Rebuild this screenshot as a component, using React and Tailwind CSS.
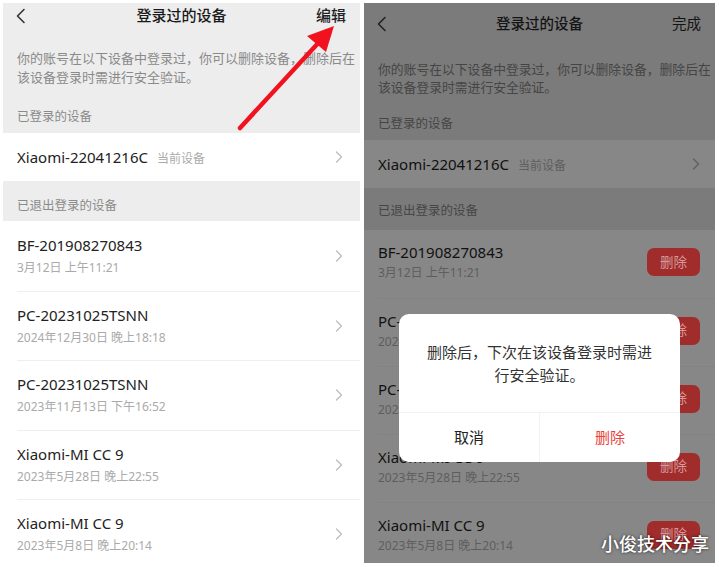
import React from 'react';

const FONT = "font-['Noto_Sans','Noto_Sans_CJK_SC',sans-serif]";

const devices = [
  { name: 'BF-201908270843', time: '3月12日 上午11:21' },
  { name: 'PC-20231025TSNN', time: '2024年12月30日 晚上18:18' },
  { name: 'PC-20231025TSNN', time: '2023年11月13日 下午16:52' },
  { name: 'Xiaomi-MI CC 9', time: '2023年5月28日 晚上22:55' },
  { name: 'Xiaomi-MI CC 9', time: '2023年5月8日 晚上20:14' },
];

const BackIcon = ({ color }) => (
  <svg width="12" height="16" viewBox="0 0 12 16" fill="none">
    <path d="M9 1.5 L2.5 8 L9 14.5" stroke={color} strokeWidth="1.6" strokeLinecap="round" strokeLinejoin="round" />
  </svg>
);

const Chevron = ({ color }) => (
  <svg width="8" height="12" viewBox="0 0 8 12" fill="none">
    <path d="M1.5 1 L6.5 6 L1.5 11" stroke={color} strokeWidth="1.2" strokeLinecap="round" strokeLinejoin="round" />
  </svg>
);

// left screen: normal state
const LeftScreen = () => (
  <div className="relative w-[357px] h-[564px] mt-[3px] ml-[3px] bg-[#ededed] overflow-hidden">
    <div className="h-[25px] px-[12px] grid grid-cols-[1fr_auto_1fr] items-center">
      <BackIcon color="#333" />
      <span className="text-[15px] font-medium text-[#1a1a1a]">登录过的设备</span>
      <span className="justify-self-end text-[15px] font-medium text-[#222] mr-[2px]">编辑</span>
    </div>
    <p className="pt-[21px] pl-[14px] pr-[2px] text-[13px] leading-[19px] text-[#8a8a8a]">
      你的账号在以下设备中登录过，你可以删除设备，删除后在该设备登录时需进行安全验证。
    </p>
    <div className="pt-[22px] pb-[8px] px-[14px] text-[12.5px] leading-[16px] text-[#8a8a8a]">已登录的设备</div>
    <div className="h-[48px] bg-white pl-[14px] pr-[17px] flex items-center justify-between">
      <div className="flex items-baseline gap-[9px]">
        <span className="text-[15px] text-[#222]">Xiaomi-22041216C</span>
        <span className="text-[12px] text-[#aaa]">当前设备</span>
      </div>
      <Chevron color="#bbb" />
    </div>
    <div className="pt-[17px] pb-[7px] px-[14px] text-[12.5px] leading-[16px] text-[#8a8a8a]">已退出登录的设备</div>
    <div className="bg-white">
      {devices.map((d, i) => (
        <div key={i} className="h-[69.5px] pl-[14px] flex">
          <div className={`flex-1 flex items-center justify-between pr-[17px] ${i > 0 ? 'border-t border-[#eeeeee]' : ''}`}>
            <div className="flex flex-col gap-[4px]">
              <span className="text-[15px] leading-[20px] text-[#222]">{d.name}</span>
              <span className="text-[12px] leading-[18px] text-[#aaa]">{d.time}</span>
            </div>
            <Chevron color="#bbb" />
          </div>
        </div>
      ))}
    </div>

    {/* annotation arrow */}
    <svg className="absolute inset-0 pointer-events-none" width="357" height="564">
      <line x1="237" y1="125" x2="318" y2="37" stroke="#f2121f" strokeWidth="4.5" strokeLinecap="round" />
      <polygon points="331,23 304,33 323,49" fill="#f2121f" />
    </svg>
  </div>
);

// right screen: edit mode, dimmed, with dialog
const RightScreen = () => (
  <div className="relative w-[351px] h-[560px] mt-[3px] ml-[4px] bg-[#7b7b7b] overflow-hidden">
    <div className="h-[42px] px-[12px] grid grid-cols-[1fr_auto_1fr] items-center">
      <BackIcon color="#222" />
      <span className="text-[14.5px] font-medium text-[#141414]">登录过的设备</span>
      <span className="justify-self-end text-[14.5px] text-[#141414] mr-[2px]">完成</span>
    </div>
    <p className="pt-[15px] pl-[14px] pr-[4px] text-[12.8px] leading-[18px] text-[#454545]">
      你的账号在以下设备中登录过，你可以删除设备，删除后在该设备登录时需进行安全验证。
    </p>
    <div className="pt-[20px] pb-[8px] px-[14px] text-[12.5px] leading-[16px] text-[#454545]">已登录的设备</div>
    <div className="h-[48px] bg-[#878787] pl-[14px] pr-[15px] flex items-center justify-between">
      <div className="flex items-baseline gap-[9px]">
        <span className="text-[15px] text-[#111]">Xiaomi-22041216C</span>
        <span className="text-[12px] text-[#5e5e5e]">当前设备</span>
      </div>
      <Chevron color="#5e5e5e" />
    </div>
    <div className="pt-[15px] pb-[11px] px-[14px] text-[12.5px] leading-[16px] text-[#454545]">已退出登录的设备</div>
    <div className="bg-[#878787]">
      {devices.map((d, i) => (
        <div key={i} className="h-[68px] pl-[14px] flex">
          <div className={`flex-1 flex items-center justify-between pr-[15px] pb-[4px] ${i > 0 ? 'border-t border-[#828282]' : ''}`}>
            <div className="flex flex-col gap-[2px]">
              <span className="text-[15px] leading-[20px] text-[#111]">{d.name}</span>
              <span className="text-[12px] leading-[18px] text-[#5e5e5e]">{d.time}</span>
            </div>
            <span className="w-[53px] h-[28px] rounded-[7px] bg-[#a02c2c] text-[#d69a9a] text-[13.5px] flex items-center justify-center">删除</span>
          </div>
        </div>
      ))}
    </div>

    {/* dialog */}
    <div className="absolute left-[35px] top-[311px] w-[281px] h-[148px] bg-white rounded-[10px] flex flex-col overflow-hidden">
      <div className="h-[98px] flex items-center justify-center px-[24px] pt-[2px]">
        <p className="text-[15px] leading-[23px] text-[#333] text-center">删除后，下次在该设备登录时需进行安全验证。</p>
      </div>
      <div className="flex-1 flex border-t border-[#f2f2f2]">
        <span className="flex-1 flex items-center justify-center text-[15px] text-[#222] border-r border-[#f2f2f2]">取消</span>
        <span className="flex-1 flex items-center justify-center text-[15px] text-[#e8453c]">删除</span>
      </div>
    </div>

    <span className="absolute right-[6px] bottom-[5px] text-[18px] font-medium text-white [text-shadow:0_0_3px_rgba(0,0,0,0.8)]">小俊技术分享</span>
  </div>
);

export default function App() {
  return (
    <div className={`w-[719px] h-[567px] bg-white flex items-start overflow-hidden ${FONT}`}>
      <LeftScreen />
      <RightScreen />
    </div>
  );
}
